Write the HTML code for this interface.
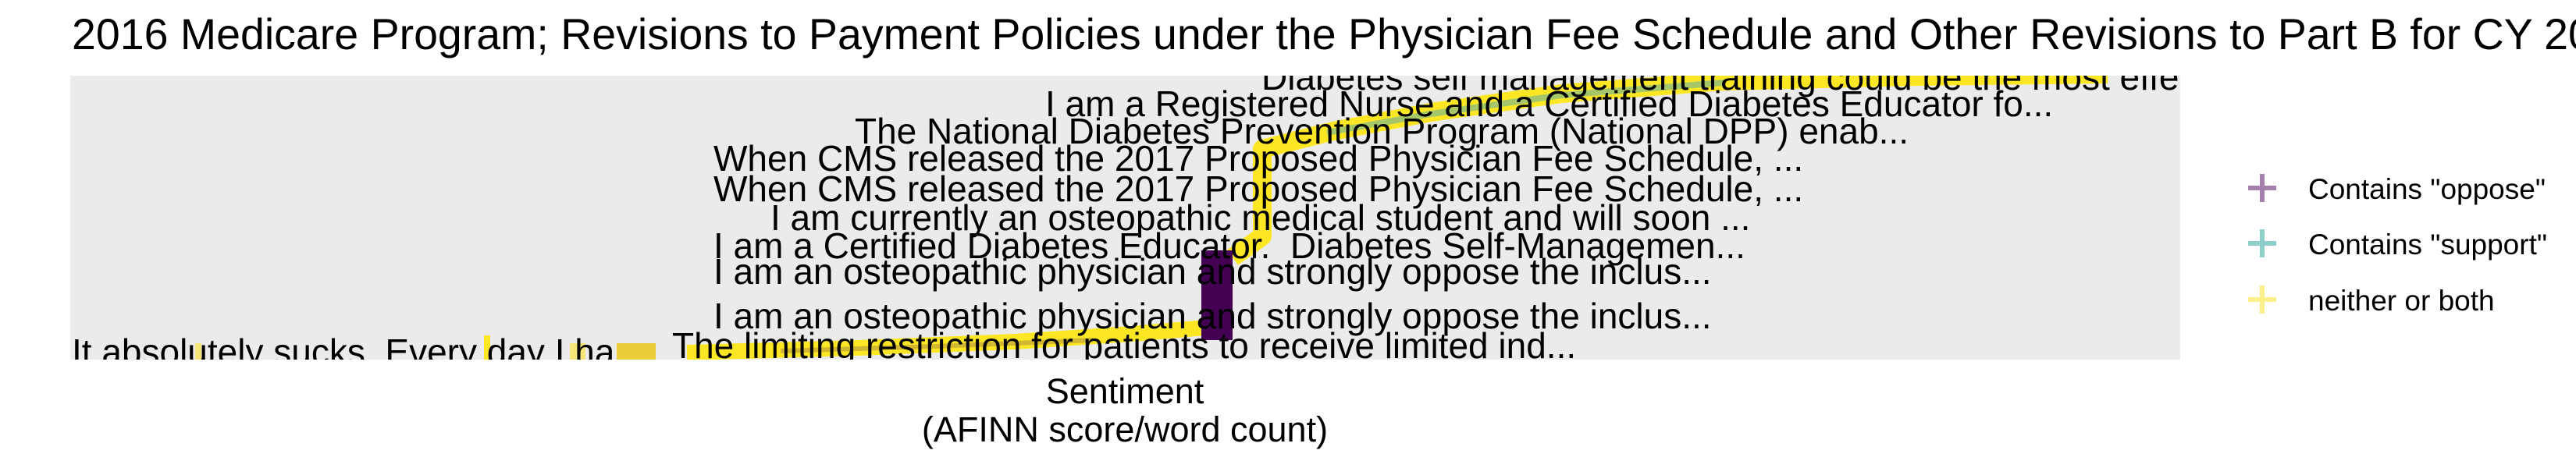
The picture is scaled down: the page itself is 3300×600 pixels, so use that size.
<!DOCTYPE html>
<html><head><meta charset="utf-8"><style>
html,body{margin:0;padding:0;background:#fff;width:3300px;height:600px;overflow:hidden}
svg{display:block}
text{font-family:"Liberation Sans",sans-serif}
</style></head><body>
<svg width="3300" height="600" xmlns="http://www.w3.org/2000/svg">
<text x="92" y="63" font-size="55.5" fill="#000">2016 Medicare Program; Revisions to Payment Policies under the Physician Fee Schedule and Other Revisions to Part B for CY 2017</text>
<defs><clipPath id="c"><rect x="90" y="97" width="2703" height="364"/></clipPath></defs>
<rect x="90" y="97" width="2703" height="364" fill="#ebebeb"/>
<g clip-path="url(#c)">
<polyline points="1579,330 1617,303 1617,191 1708,168 1833,144 2000,120 2208,104 2458,98 2700,95" fill="none" stroke="#fde725" stroke-width="24" stroke-linejoin="round"/>
<polyline points="1700,170 1833,146 2000,122 2208,106" fill="none" stroke="#8fbf7a" stroke-width="8" opacity="0.8"/>
<polyline points="880,452 1100,446 1300,438 1450,428 1545,420" fill="none" stroke="#fde725" stroke-width="20"/>
<polyline points="1000,450 1200,444 1400,436" fill="none" stroke="#b59a3a" stroke-width="6" opacity="0.6"/>
<rect x="1539" y="321" width="40" height="115" fill="#440154"/>
<rect x="250" y="440" width="8" height="21" fill="#f7e57a"/>
<rect x="620" y="430" width="8" height="31" fill="#fde725"/>
<rect x="730" y="440" width="20" height="21" fill="#f7e57a"/>
<rect x="790" y="440" width="50" height="21" fill="#e9cd3a"/>
<g font-size="46" fill="#000">
<text x="1616" y="115">Diabetes self management training could be the most effective</text>
<text x="1339" y="149">I am a Registered Nurse and a Certified Diabetes Educator fo...</text>
<text x="1095" y="184">The National Diabetes Prevention Program (National DPP) enab...</text>
<text x="914" y="219">When CMS released the 2017 Proposed Physician Fee Schedule, ...</text>
<text x="914" y="258">When CMS released the 2017 Proposed Physician Fee Schedule, ...</text>
<text x="987" y="295">I am currently an osteopathic medical student and will soon ...</text>
<text x="914" y="331" xml:space="preserve">I am a Certified Diabetes Educator.  Diabetes Self-Managemen...</text>
<text x="914" y="364">I am an osteopathic physician and strongly oppose the inclus...</text>
<text x="914" y="421">I am an osteopathic physician and strongly oppose the inclus...</text>
<text x="861" y="459">The limiting restriction for patients to receive limited ind...</text>
<text x="92" y="467">It absolutely sucks. Every day I ha...</text>
</g>
</g>
<text x="1441" y="517" font-size="45" text-anchor="middle">Sentiment</text>
<text x="1441" y="566" font-size="45" text-anchor="middle">(AFINN score/word count)</text>
<g stroke-width="6">
<path d="M2880 241H2916M2898 223V259" stroke="#a57fae"/>
<path d="M2880 312H2916M2898 294V330" stroke="#8fcfca"/>
<path d="M2880 384H2916M2898 366V402" stroke="#fdf08a"/>
</g>
<g font-size="37">
<text x="2957" y="255">Contains "oppose"</text>
<text x="2957" y="326">Contains "support"</text>
<text x="2957" y="398">neither or both</text>
</g>
</svg>
</body></html>
